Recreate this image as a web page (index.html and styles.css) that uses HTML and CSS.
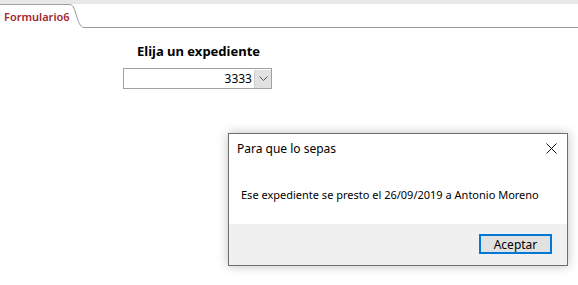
FILE: index.html
```html
<!DOCTYPE html>
<html lang="es">
<head>
  <meta charset="UTF-8">
  <title>Formulario6</title>
  <link rel="stylesheet" href="styles.css">
</head>
<body>

  <div class="tabbar">
    <div class="tab">Formulario6</div>
    <svg class="tab-curve" width="18" height="24" viewBox="0 0 18 24">
      <path d="M0 0.5 H1 C5 0.5 6 4 8 10 C10 17 12 23.5 16 23.5 H18" fill="none" stroke="#9a9a9a" stroke-width="1"/>
    </svg>
    <div class="tab-rest"></div>
  </div>

  <div class="form">
    <h2>Elija un expediente</h2>
    <div class="combo">
      <span class="combo-value">3333</span>
      <span class="combo-btn">
        <svg width="9" height="6" viewBox="0 0 9 6">
          <path d="M0.5 0.5 L4.5 4.5 L8.5 0.5" fill="none" stroke="#555" stroke-width="1"/>
        </svg>
      </span>
    </div>
  </div>

  <div class="dialog">
    <div class="dialog-title">
      <span>Para que lo sepas</span>
      <svg class="close" width="11" height="11" viewBox="0 0 11 11">
        <path d="M0.5 0.5 L10.5 10.5 M10.5 0.5 L0.5 10.5" stroke="#111" stroke-width="1"/>
      </svg>
    </div>
    <div class="dialog-body">Ese expediente se presto el 26/09/2019 a Antonio Moreno</div>
    <div class="dialog-footer">
      <button class="ok">Aceptar</button>
    </div>
  </div>

</body>
</html>
```

FILE: styles.css
```css
body {
  margin: 0;
  font-family: "Noto Sans", "Open Sans", sans-serif;
  font-size: 12px;
  color: #000;
  background: #fff;
  width: 578px;
  height: 285px;
  position: relative;
  overflow: hidden;
}
.tabbar {
  display: flex;
  align-items: flex-start;
  border-top: 4px solid #e8e8e8;
  height: 24px;
}
.tab {
  width: 64px;
  height: 23px;
  border-top: 1px solid #a0a0a0;
  padding-left: 4px;
  color: #a4262c;
  font-weight: 600;
  font-size: 11px;
  line-height: 23px;
}
.tab-curve {
  display: block;
}
.tab-rest {
  flex: 1;
  height: 23px;
  border-bottom: 1px solid #9a9a9a;
}
.form {
  display: flex;
  flex-direction: column;
  align-items: flex-start;
  padding-left: 123px;
}
.form h2 {
  margin: 14px 0 8px 14px;
  font-size: 13px;
  font-weight: 700;
  line-height: 18px;
}
.combo {
  display: flex;
  align-items: center;
  width: 147px;
  height: 19px;
  border: 1px solid #a0a0a0;
}
.combo-value {
  flex: 1;
  text-align: right;
  padding-right: 2px;
  font-size: 12px;
}
.combo-btn {
  width: 16px;
  height: 18px;
  background: #e1e1e1;
  border-left: 1px solid #cfcfcf;
  display: flex;
  align-items: center;
  justify-content: center;
}
.dialog {
  position: absolute;
  left: 228px;
  top: 133px;
  width: 338px;
  height: 131px;
  border: 1px solid #6e6e6e;
  box-shadow: 0 0 10px rgba(0, 0, 0, 0.25);
  display: flex;
  flex-direction: column;
  background: #fff;
}
.dialog-title {
  display: flex;
  justify-content: space-between;
  align-items: center;
  height: 29px;
  padding: 0 10px 0 8px;
}
.dialog-body {
  flex: 1;
  padding: 24px 0 0 12px;
  font-size: 11px;
}
.dialog-footer {
  height: 41px;
  background: #f0f0f0;
  display: flex;
  justify-content: flex-end;
  align-items: center;
  padding-right: 15px;
}
.ok {
  width: 73px;
  height: 20px;
  border: 2px solid #0078d7;
  background: #e1e1e1;
  font-family: inherit;
  font-size: 12px;
  padding: 0;
  color: #000;
  margin-top: -2px;
}
```
